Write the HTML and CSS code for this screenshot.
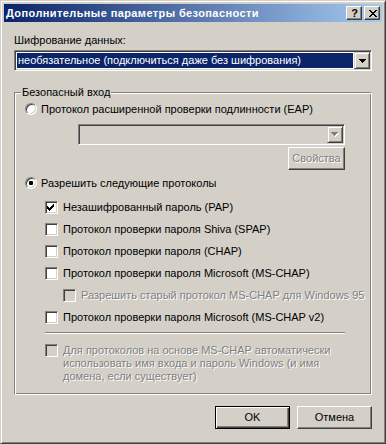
FILE: index.html
```html
<!DOCTYPE html>
<html lang="ru">
<head>
<meta charset="utf-8">
<title>Дополнительные параметры безопасности</title>
<link rel="stylesheet" href="styles.css">
</head>
<body>
<div class="window">
  <div class="titlebar">
    <span class="title">Дополнительные параметры безопасности</span>
    <div class="tbuttons">
      <span class="tbtn help">?</span>
      <span class="tbtn close"><svg width="8" height="7" viewBox="0 0 8 7"><path d="M0 0h2v1h1v1h2v-1h1v-1h2v1h-1v1h-1v1h-1v1h1v1h1v1h1v1h-2v-1h-1v-1h-2v1h-1v1h-2v-1h1v-1h1v-1h1v-1h-1v-1h-1v-1h-1z" fill="#000"/></svg></span>
    </div>
  </div>
  <div class="content">
    <div class="label">Шифрование данных:</div>
    <div class="combo">
      <div class="combo-value selected">необязательное (подключиться даже без шифрования)</div>
      <div class="combo-btn"><svg width="7" height="4" viewBox="0 0 7 4"><path d="M0 0h7v1h-1v1h-1v1h-1v1h-1v-1h-1v-1h-1v-1h-1z" fill="#000"/></svg></div>
    </div>

    <div class="group">
      <span class="legend">Безопасный вход</span>
      <div class="row first">
        <span class="radio"></span><span>Протокол расширенной проверки подлинности (EAP)</span>
      </div>
      <div class="combo eap disabled">
        <div class="combo-value"></div>
        <div class="combo-btn"><svg width="8" height="5" viewBox="0 0 8 5"><path d="M1 1h7v1h-1v1h-1v1h-1v1h-1v-1h-1v-1h-1v-1h-1z" fill="#fff"/><path d="M0 0h7v1h-1v1h-1v1h-1v1h-1v-1h-1v-1h-1v-1h-1z" fill="#808080"/></svg></div>
      </div>
      <div class="props-row"><span class="btn props dim">Свойства</span></div>
      <div class="row radio2">
        <span class="radio checked"></span><span>Разрешить следующие протоколы</span>
      </div>
      <div class="checks">
        <div class="row indent"><span class="check checked"><svg width="9" height="9" viewBox="0 0 9 9"><path d="M7 1v3h-1v1h-1v1h-1v1h-1v1h-1v-1h-1v-1h-1v-3h1v1h1v1h1v-1h1v-1h1v-1h1v-1z" fill="#000"/></svg></span><span>Незашифрованный пароль (PAP)</span></div>
        <div class="row indent"><span class="check"></span><span>Протокол проверки пароля Shiva (SPAP)</span></div>
        <div class="row indent"><span class="check"></span><span>Протокол проверки пароля (CHAP)</span></div>
        <div class="row indent"><span class="check"></span><span>Протокол проверки пароля Microsoft (MS-CHAP)</span></div>
        <div class="row indent2"><span class="check off"></span><span class="dim">Разрешить старый протокол MS-CHAP для Windows 95</span></div>
        <div class="row indent"><span class="check"></span><span>Протокол проверки пароля Microsoft (MS-CHAP v2)</span></div>
      </div>
      <div class="sep"></div>
      <div class="multi">
        <span class="check off"></span>
        <span class="dim">Для протоколов на основе MS-CHAP автоматически<br>использовать имя входа и пароль Windows (и имя<br>домена, если существует)</span>
      </div>
    </div>

    <div class="footer">
      <span class="btn default">OK</span>
      <span class="btn">Отмена</span>
    </div>
  </div>
</div>
</body>
</html>
```
FILE: styles.css
```css
* { box-sizing: border-box; }
html, body { margin: 0; padding: 0; }
body {
  width: 386px;
  height: 444px;
  background: #D4D0C8;
  font-family: "Liberation Sans", Arial, sans-serif;
  font-size: 11px;
  color: #000;
  overflow: hidden;
}
.window {
  width: 386px;
  height: 444px;
  background: #D4D0C8;
  border: 1px solid;
  border-color: #D4D0C8 #404040 #404040 #D4D0C8;
  box-shadow: inset 1px 1px #fff, inset -1px -1px #808080;
  padding: 3px;
  display: flex;
  flex-direction: column;
}
.titlebar {
  height: 18px;
  background: linear-gradient(to right, #0A246A, #A6CAF0);
  display: flex;
  align-items: center;
  padding-left: 2px;
}
.title {
  color: #fff;
  font-weight: bold;
  font-size: 11px;
  letter-spacing: 0.4px;
  white-space: nowrap;
}
.tbuttons {
  margin-left: auto;
  margin-right: 2px;
  display: flex;
  gap: 2px;
}
.tbtn {
  width: 16px;
  height: 14px;
  background: #D4D0C8;
  border: 1px solid;
  border-color: #fff #404040 #404040 #fff;
  box-shadow: inset -1px -1px #808080;
  display: flex;
  align-items: center;
  justify-content: center;
}
.tbtn.help {
  font-weight: bold;
  font-size: 11px;
  line-height: 12px;
  padding-left: 1px;
}
.tbtn.close svg { display: block; margin-left: 1px; }

.content {
  padding: 0 10px;
  display: flex;
  flex-direction: column;
}
.label {
  margin-top: 12px;
  line-height: 13px;
  height: 13px;
}
.combo {
  margin-top: 3px;
  height: 21px;
  display: flex;
  border: 1px solid;
  border-color: #808080 #fff #fff #808080;
  box-shadow: inset 1px 1px #404040, inset -1px -1px #D4D0C8;
  padding: 1px;
  background: #fff;
}
.combo-value {
  flex: 1;
  margin: 1px;
  line-height: 15px;
  padding-left: 1px;
  white-space: nowrap;
  overflow: hidden;
}
.combo-value.selected {
  background: #0A246A;
  color: #fff;
}
.combo-btn {
  width: 16px;
  height: 17px;
  background: #D4D0C8;
  border: 1px solid;
  border-color: #D4D0C8 #404040 #404040 #D4D0C8;
  box-shadow: inset 1px 1px #fff, inset -1px -1px #808080;
  display: flex;
  align-items: center;
  justify-content: center;
}
.combo-btn svg { display: block; }
.combo.disabled { background: #D4D0C8; }
.combo.eap {
  margin: 4px 26px 0 53px;
  height: 21px;
}

.group {
  position: relative;
  margin-top: 21px;
  border: 1px solid;
  border-color: #808080 #fff #fff #808080;
  box-shadow: inset 1px 1px #fff, inset -1px -1px #808080;
  padding: 5px 0 11px 10px;
  display: flex;
  flex-direction: column;
}
.legend {
  position: absolute;
  top: -7px;
  left: 6px;
  background: #D4D0C8;
  padding: 0 1px;
  line-height: 13px;
}
.row {
  display: flex;
  align-items: center;
  height: 22px;
  white-space: nowrap;
}
.radio {
  width: 12px;
  height: 12px;
  border-radius: 50%;
  border: 1px solid;
  border-color: #808080 #fff #fff #808080;
  box-shadow: inset 1px 1px #404040, inset -1px -1px #D4D0C8;
  background: #fff;
  margin-right: 4px;
  position: relative;
  flex: none;
}
.radio.checked::after {
  content: "";
  position: absolute;
  left: 3px;
  top: 3px;
  width: 4px;
  height: 4px;
  border-radius: 1px;
  background: #000;
}
.props-row {
  display: flex;
  justify-content: flex-end;
  margin: 2px 26px 0 0;
}
.btn {
  width: 75px;
  height: 23px;
  background: #D4D0C8;
  border: 1px solid;
  border-color: #fff #404040 #404040 #fff;
  box-shadow: inset -1px -1px #808080;
  display: flex;
  align-items: center;
  justify-content: center;
  line-height: 13px;
}
.btn.props { width: 57px; }
.btn.default {
  border-color: #000;
  box-shadow: inset 1px 1px #fff, inset -1px -1px #404040, inset -2px -2px #808080;
}
.dim {
  color: #808080;
  text-shadow: 1px 1px 0 #fff;
}
.radio2 { margin-top: 2px; }
.checks {
  margin-top: 2px;
  display: flex;
  flex-direction: column;
}
.indent { padding-left: 20px; }
.indent2 { padding-left: 38px; }
.check {
  width: 13px;
  height: 13px;
  flex: none;
  border: 1px solid;
  border-color: #808080 #fff #fff #808080;
  box-shadow: inset 1px 1px #404040, inset -1px -1px #D4D0C8;
  background: #fff;
  margin-right: 5px;
  padding: 1px;
}
.check svg { display: block; }
.check.off { background: #D4D0C8; }
.sep {
  margin: 4px 26px 0 20px;
  height: 2px;
  border-top: 1px solid #808080;
  border-bottom: 1px solid #fff;
}
.multi {
  margin-top: 10px;
  padding-left: 20px;
  display: flex;
  align-items: flex-start;
  line-height: 13px;
  white-space: nowrap;
}
.footer {
  margin-top: 11px;
  display: flex;
  justify-content: flex-end;
  gap: 7px;
}
```
